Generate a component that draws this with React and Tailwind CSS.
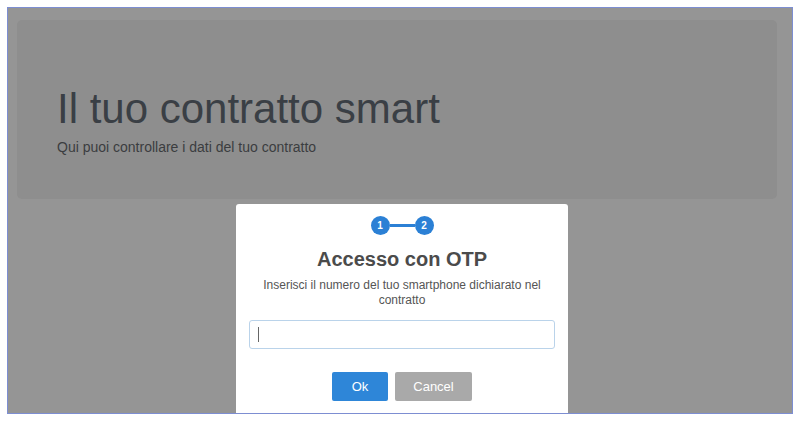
import { useState } from "react";

function Steps() {
  return (
    <div className="flex items-center justify-center">
      <span className="flex h-[19px] w-[19px] items-center justify-center rounded-full bg-[#2b80d5] text-[10px] font-bold text-white">
        1
      </span>
      <span className="h-[3px] w-[25px] bg-[#2b80d5]" />
      <span className="flex h-[19px] w-[19px] items-center justify-center rounded-full bg-[#2b80d5] text-[10px] font-bold text-white">
        2
      </span>
    </div>
  );
}

function OtpModal() {
  const [phone, setPhone] = useState("");

  return (
    <div className="absolute left-[228px] top-[196px] h-[260px] w-[332px] rounded-[3px] bg-white px-[13px] pt-[12px] text-center">
      <Steps />
      <h2 className="mt-[12px] text-[20px] font-bold leading-[24px] text-[#4b4b4b]">
        Accesso con OTP
      </h2>
      <p className="mt-[7px] px-[8px] text-[12px] leading-[15px] text-[#555]">
        Inserisci il numero del tuo smartphone dichiarato nel contratto
      </p>

      {/* fake caret so the focused look stays put in the screenshot */}
      <div className="relative mt-[12px]">
        <input
          value={phone}
          onChange={(e) => setPhone(e.target.value)}
          className="block h-[29px] w-full rounded-[3px] border border-[#bad3ea] px-[9px] text-[13px] text-[#555] caret-transparent outline-none"
        />
        {phone === "" && (
          <span className="absolute left-[9px] top-[7px] h-[15px] w-px bg-[#666]" />
        )}
      </div>

      <div className="mt-[23px] flex justify-center gap-[7px]">
        <button className="h-[29px] w-[56px] rounded-[2px] bg-[#2e86d8] text-[13px] text-white">
          Ok
        </button>
        <button className="h-[29px] w-[77px] rounded-[2px] bg-[#a9a9a9] text-[13px] text-white">
          Cancel
        </button>
      </div>
    </div>
  );
}

export default function App() {
  return (
    <div className="h-[421px] w-[803px] bg-white pl-[7px] pt-[7px] font-['Liberation_Sans',Arial,sans-serif]">
      <div className="relative h-[407px] w-[786px] overflow-hidden border border-[#7d8ed2] bg-[#959595] pl-[9px] pr-[15px] pt-[12px]">
        <div className="h-[179px] rounded-[5px] bg-[#8e8e8e] pl-[40px] pt-[66px]">
          <h1 className="text-[42px] leading-[45px] text-[#3a3f45]">
            Il tuo contratto smart
          </h1>
          <p className="mt-[6px] text-[14px] leading-[20px] text-[#3b3d40]">
            Qui puoi controllare i dati del tuo contratto
          </p>
        </div>
        <OtpModal />
      </div>
    </div>
  );
}
